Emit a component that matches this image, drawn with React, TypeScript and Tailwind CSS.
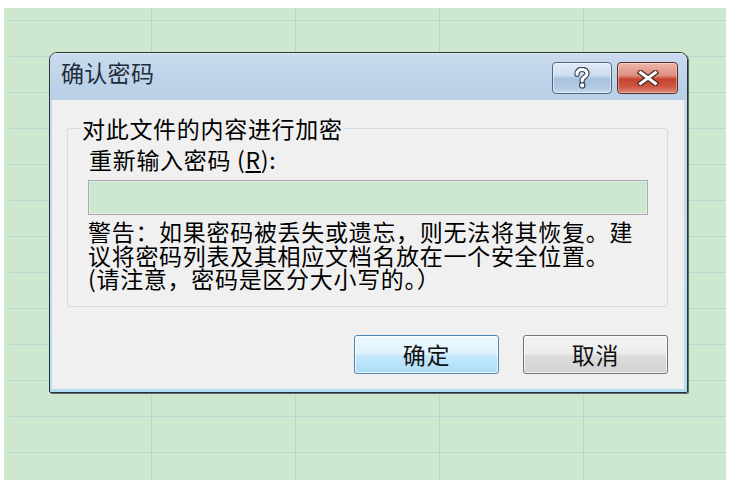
import React from "react";

const cjk = "font-['Noto_Sans_CJK_SC','Noto_Sans_CJK_JP',sans-serif]";

function HelpGlyph() {
  return (
    <svg width="18" height="22" viewBox="0 0 18 22" className="block">
      <path
        d="M4 7.2 C4 3.8 6.2 2.4 9 2.4 C12 2.4 14 4.2 14 6.6 C14 9.4 10 10.2 9.2 12.6 L9.2 14"
        fill="none"
        stroke="#3a4b5c"
        strokeWidth="5.4"
        strokeLinecap="round"
      />
      <path
        d="M4 7.2 C4 3.8 6.2 2.4 9 2.4 C12 2.4 14 4.2 14 6.6 C14 9.4 10 10.2 9.2 12.6 L9.2 14"
        fill="none"
        stroke="#ffffff"
        strokeWidth="3"
        strokeLinecap="round"
      />
      <circle cx="9.2" cy="18.4" r="2.7" fill="#ffffff" stroke="#3a4b5c" strokeWidth="1.2" />
    </svg>
  );
}

function CloseGlyph() {
  return (
    <svg width="22" height="16" viewBox="0 0 22 16" className="block">
      <path d="M3.5 2.5 L18.5 13.5 M18.5 2.5 L3.5 13.5" stroke="#4a2a26" strokeWidth="5.4" strokeLinecap="square" fill="none" />
      <path d="M3.5 2.5 L18.5 13.5 M18.5 2.5 L3.5 13.5" stroke="#ffffff" strokeWidth="3" strokeLinecap="square" fill="none" />
    </svg>
  );
}

export default function App() {
  return (
    <div className={`w-[744px] h-[486px] bg-white pt-[8px] pl-[4px] ${cjk}`}>
      <div className="w-[722px] h-[472px] flex flex-col bg-[#cde8cf] bg-[linear-gradient(to_right,#cde8cf_5px,transparent_5px),linear-gradient(to_right,#bdd5d0_1px,transparent_1px),linear-gradient(to_bottom,#bdd5d0_1px,transparent_1px)] bg-[size:100%_100%,144px_36px,144px_36px] bg-[position:0_0,3px_12px,3px_12px]">
        {/* Dialog */}
        <div className="ml-[45px] mt-[44px] w-[639px] h-[341px] flex flex-col rounded-t-[8px] rounded-b-[2px] border border-[#2a3238] shadow-[1px_1px_0_#5b6770] overflow-hidden bg-[linear-gradient(to_bottom,#c9dbee,#c3d8ec_40%,#b2dff1)]">
          {/* Title bar */}
          <div className="h-[47px] shrink-0 flex items-start pl-[11px] pr-[9px] bg-[linear-gradient(to_bottom,#cadbee,#bed2e8_60%,#b9cfe7)] shadow-[inset_0_1px_0_#e4eef8]">
            <div className="mt-[7px] text-[23px] leading-[24px] tracking-[0.3px] text-[#1f2e3b]">
              确认密码
            </div>
            <div className="ml-auto mt-[9px] flex gap-[5px]">
              <div className="w-[60px] h-[32px] rounded-[4px] border border-[#50687f] flex items-center justify-center bg-[linear-gradient(to_bottom,#e2ebf6_0%,#cddcee_42%,#a9c2de_52%,#b2c9e3_80%,#c8d9ed_100%)] shadow-[inset_0_0_0_1px_rgba(255,255,255,0.45)]">
                <HelpGlyph />
              </div>
              <div className="w-[61px] h-[32px] rounded-[4px] border border-[#5a2c26] flex items-center justify-center bg-[linear-gradient(to_bottom,#ecb6aa_0%,#de8e7f_42%,#c6432f_54%,#cd5744_78%,#df8876_100%)] shadow-[inset_0_0_0_1px_rgba(255,255,255,0.35)]">
                <CloseGlyph />
              </div>
            </div>
          </div>

          {/* Client area */}
          <div className="flex-1 ml-[2px] mr-[3px] mb-[3px] bg-[#f0f0f0] flex flex-col pl-[15px] pr-[16px] pt-[16px] text-black">
            <fieldset className="w-[601px] border border-[#d3dce2] rounded-[3px] pl-[13px] pb-[15px]">
              <legend className="px-[1px] text-[23px] leading-[24px] tracking-[0.7px]">
                对此文件的内容进行加密
              </legend>
              <div className="pl-[7px] flex flex-col">
                <div className="mt-[7px] pl-[1px] text-[23px] leading-[24px] tracking-[0.7px] whitespace-nowrap">
                  重新输入密码 (<span className="underline underline-offset-[2px]">R</span>):
                </div>
                <div className="mt-[9px] w-[560px] h-[35px] border border-[#a7abb0] bg-[#cde8cf] shadow-[inset_0_0_0_1px_#e4ece6]" />
                <div className="mt-[5px] text-[23px] leading-[23.5px] tracking-[0.7px] whitespace-nowrap">
                  <div>警告：如果密码被丢失或遗忘，则无法将其恢复。建</div>
                  <div>议将密码列表及其相应文档名放在一个安全位置。</div>
                  <div>(请注意，密码是区分大小写的。）</div>
                </div>
              </div>
            </fieldset>

            <div className="mt-[28px] flex justify-end gap-[24px]">
              <button className="w-[145px] h-[39px] rounded-[3px] border border-[#4f86b4] text-[23px] leading-[24px] tracking-[0.7px] text-[#111] bg-[linear-gradient(to_bottom,#eef8fe_0%,#def2fd_48%,#c6e9fd_52%,#abdcf6_100%)] shadow-[inset_0_0_0_1px_rgba(255,255,255,0.75)]">
                确定
              </button>
              <button className="w-[145px] h-[39px] rounded-[3px] border border-[#737373] text-[23px] leading-[24px] tracking-[0.7px] text-[#111] bg-[linear-gradient(to_bottom,#f4f4f4_0%,#ececec_48%,#dedede_52%,#d1d1d1_100%)] shadow-[inset_0_0_0_1px_rgba(255,255,255,0.7)]">
                取消
              </button>
            </div>
          </div>
        </div>
      </div>
    </div>
  );
}
